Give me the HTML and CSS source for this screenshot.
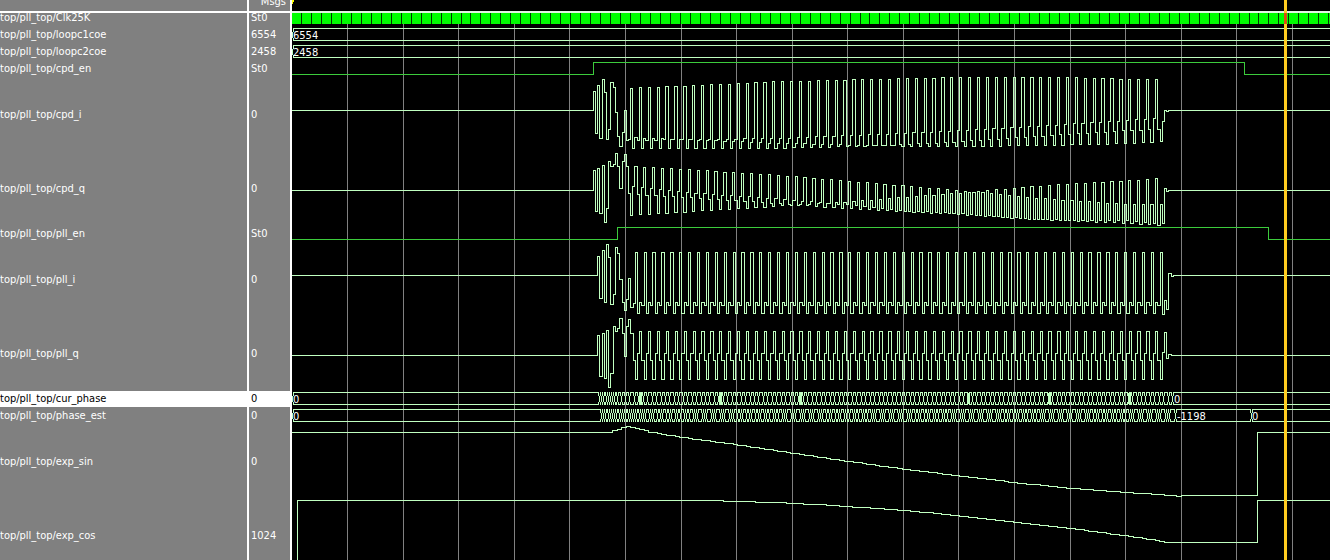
FILE: index.html
```html
<!DOCTYPE html>
<html lang="en">
<head>
<meta charset="utf-8">
<title>Wave</title>
<link rel="stylesheet" href="styles.css">
</head>
<body>
<main class="viewer">
  <section class="pane names" aria-label="Signals">
    <div class="head"></div>
    <div class="row first">top/pll_top/Clk25K</div>
    <div class="row">top/pll_top/loopc1coe</div>
    <div class="row">top/pll_top/loopc2coe</div>
    <div class="row">top/pll_top/cpd_en</div>
    <div class="row tall">top/pll_top/cpd_i</div>
    <div class="row tall">top/pll_top/cpd_q</div>
    <div class="row">top/pll_top/pll_en</div>
    <div class="row tall">top/pll_top/pll_i</div>
    <div class="row tall">top/pll_top/pll_q</div>
    <div class="row selected">top/pll_top/cur_phase</div>
    <div class="row">top/pll_top/phase_est</div>
    <div class="row tall">top/pll_top/exp_sin</div>
    <div class="row tall">top/pll_top/exp_cos</div>
  </section>
  <section class="pane values" aria-label="Values">
    <div class="head">Msgs</div>
    <div class="row first">St0</div>
    <div class="row">6554</div>
    <div class="row">2458</div>
    <div class="row">St0</div>
    <div class="row tall">0</div>
    <div class="row tall">0</div>
    <div class="row">St0</div>
    <div class="row tall">0</div>
    <div class="row tall">0</div>
    <div class="row selected">0</div>
    <div class="row">0</div>
    <div class="row tall">0</div>
    <div class="row tall">1024</div>
  </section>
  <section class="waves" aria-label="Waveforms">
    <svg class="plot" id="plot"></svg>
  </section>
</main>
<script src="waves.js"></script>
</body>
</html>
```
FILE: styles.css
```css
* {
  box-sizing: border-box;
}

body {
  margin: 0;
  height: 100vh;
  overflow: hidden;
  background: #000;
  color: #fff;
  font-family: "DejaVu Sans Condensed", "Noto Sans", sans-serif;
  font-size: 11px;
  line-height: 16px;
}

.viewer {
  display: grid;
  grid-template-columns: 249px 43px minmax(0, 1fr);
  height: 100%;
}

.pane {
  background: #808080;
  border-right: 2px solid #fff;
  overflow: hidden;
  white-space: nowrap;
}

.head {
  display: flex;
  align-items: flex-end;
  justify-content: flex-end;
  height: 13px;
  padding-right: 4px;
  padding-bottom: 1px;
  border-bottom: 2px solid #fff;
}

.row {
  display: flex;
  align-items: center;
  height: 17px;
  border-top: 1px solid #808080;
}

.first {
  height: 13px;
  line-height: 10px;
  align-items: flex-start;
  border-top: 0;
}

.tall {
  height: 74px;
}

.selected {
  background: #fff;
  color: #000;
}

.values .row {
  padding-left: 2px;
}

.waves {
  overflow: hidden;
}

.plot {
  display: block;
  width: 100%;
  height: 100%;
}

.plot path {
  fill: none;
  stroke-width: 1px;
  shape-rendering: crispEdges;
}

.plot rect {
  shape-rendering: crispEdges;
}

.plot .grid {
  stroke: #808080;
}

.plot .vector {
  stroke: #c0ffc0;
}

.plot .logic {
  stroke: #3ccb3c;
}

.plot .tick {
  stroke: #003800;
}

.plot .clock {
  fill: #00ff00;
}

.plot .dense {
  fill: #c0ffc0;
}

.plot .rule {
  fill: #e4f4e4;
}

.plot .cursor {
  fill: #ffcc20;
}

.plot .cursor-clock {
  fill: #d85010;
}

.plot .marker {
  fill: #ffff00;
}

.plot text {
  fill: #fff;
}
```
FILE: waves.js
```js
const NS = "http://www.w3.org/2000/svg";
const plot = document.getElementById("plot");
const ORIGIN = 292;
const END = 4000;
const STEP = 8.898 / 4;

const root = document.createElementNS(NS, "g");
root.setAttribute("transform", "translate(" + -ORIGIN + " 0)");
plot.append(root);

function add(tag, attrs, text) {
  const node = document.createElementNS(NS, tag);
  for (const key in attrs) node.setAttribute(key, attrs[key]);
  if (text) node.textContent = text;
  root.append(node);
}

const rect = (cls, x, y, width, height) => add("rect", { class: cls, x, y, width, height });
const path = (cls, d) => add("path", { class: cls, d });
const px = v => Math.floor(v) + 0.5;

// Stepped line: each [x, y] holds its level until the next point.
function steps(cls, points) {
  let d = "M" + ORIGIN + " " + px(points[0][1]);
  points.slice(1).forEach(p => { d += "H" + px(p[0]) + "V" + px(p[1]); });
  path(cls, d + "H" + END);
}

function level(keys, x) {
  if (x <= keys[0][0]) return keys[0][1];
  for (let i = 1; i < keys.length; i++) {
    const [x0, y0] = keys[i - 1];
    const [x1, y1] = keys[i];
    if (x <= x1) return y0 + (y1 - y0) * (x - x0) / (x1 - x0);
  }
  return keys[keys.length - 1][1];
}

// Lists of [third-of-pixel x, third-of-pixel y] relative to (ox, oy).
const scaled = (ox, oy, list) => list.map(([x, y]) => [ox + x / 3, oy + y / 3]);

function burst(start, periods, slots) {
  const out = [];
  for (let n = 0; n < periods * 4 + 1; n++) {
    const x = start + n * STEP;
    out.push([x, level(slots[n % 4], x) + 0.3]);
  }
  return out;
}

for (let x = 347.2; x < END; x += 55.57) path("grid", "M" + (Math.round(x) + 0.5) + " 24V3000");

// Clock
rect("clock", ORIGIN, 13, END, 11);
for (let x = 301.4; x < END; x += 9.975) path("tick", "M" + px(x) + " 13V24");
rect("rule", ORIGIN, 11, END, 2);

steps("logic", [[292, 74], [593, 62], [1244, 74]]);
steps("logic", [[292, 239], [617, 227], [1268, 239]]);

// cpd_i
steps("vector", [
  ...scaled(580, 60, [[-864, 151], [40, 94], [47, 220], [52, 76], [58, 235], [68, 58], [74, 97], [79, 238],
    [85, 208], [91, 67], [100, 82], [106, 157], [112, 229], [118, 259], [127, 217], [133, 151], [139, 241], [145, 238]]),
  ...burst(630.4, 59, [
    [[631, 88], [680, 86], [775, 81.5], [880, 79], [950, 77.3], [1060, 77.3], [1130, 79], [1156, 79]],
    [[631, 148], [775, 148], [880, 145.5], [950, 142], [1035, 136.3], [1130, 130], [1156, 129.3]],
    [[631, 137.5], [680, 139], [775, 143], [880, 145.5], [950, 146.5], [1035, 145.3], [1130, 143.3], [1156, 141.5]],
    [[631, 140.3], [680, 139.3], [775, 138.3], [880, 134], [950, 131], [1035, 126], [1130, 120], [1156, 118]]
  ]),
  ...scaled(1080, 0, [[233, 388], [241, 424], [247, 364], [253, 331], [259, 334], [265, 331]])
]);

// cpd_q
steps("vector", [
  ...scaled(580, 60, [[-864, 391], [40, 331], [46, 454], [52, 325], [58, 460], [67, 316], [73, 487], [79, 445],
    [85, 304], [91, 319], [100, 313], [106, 280], [112, 319], [118, 385], [127, 304], [133, 283], [139, 319], [145, 400]]),
  ...burst(630.4, 59, [
    [[631, 215], [680, 212], [775, 206], [840, 202.3], [903, 197], [950, 193.7], [1035, 186], [1130, 180.3], [1156, 178.3]],
    [[631, 186], [680, 192], [775, 198.5], [840, 204], [903, 210.7], [950, 212.7], [1035, 219], [1130, 223.3], [1156, 225]],
    [[631, 166], [680, 169], [775, 175], [840, 180.3], [910, 186.3], [950, 189.5], [1035, 198], [1130, 204.3], [1156, 204.3]],
    [[631, 194.3], [680, 197], [775, 203], [840, 208], [910, 211.7], [950, 213.7], [1035, 219.5], [1130, 220.3], [1156, 223]]
  ]),
  ...scaled(1080, 0, [[232, 676], [241, 613], [247, 670], [253, 565], [259, 574], [265, 571]])
]);

// pll_i
steps("vector", [
  ...scaled(580, 235, [[-864, 121], [52, 64], [58, 190], [67, 46], [73, 202], [79, 28], [85, 67], [91, 208],
    [100, 178], [106, 37], [112, 55], [118, 133], [127, 202], [133, 226], [139, 193], [145, 130], [151, 217], [160, 205]]),
  ...burst(635.2, 59, [[[0, 252]], [[0, 313]], [[0, 302]], [[0, 305]]]),
  ...scaled(1080, 240, [[247, 223], [253, 181], [259, 208], [265, 100], [274, 109], [280, 106]])
]);

// pll_q
steps("vector", [
  ...scaled(580, 235, [[-864, 361], [52, 301], [58, 424], [67, 295], [73, 430], [79, 286], [85, 457], [91, 415],
    [100, 274], [106, 289], [112, 280], [118, 250], [127, 295], [133, 364], [139, 274], [145, 253], [151, 295], [160, 376]]),
  ...burst(635.2, 59, [[[0, 379]], [[0, 353]], [[0, 331]], [[0, 360]]]),
  ...scaled(1080, 240, [[247, 337], [253, 277], [259, 355], [265, 343], [274, 346]])
]);

// Bus: two rails joined at every value change.
function bus(top, changes) {
  const t = top + 0.5;
  const b = top + 12.5;
  let d = "";
  let from = ORIGIN;
  changes.forEach(c => {
    const x = px(c);
    d += "M" + from + " " + t + "H" + (x - 0.5) + "M" + from + " " + b + "H" + (x - 0.5);
    d += "M" + (x - 1) + " " + t + "V" + (t + 3) + "M" + x + " " + (t + 3) + "V" + (b - 3) + "M" + (x - 1) + " " + (b - 3) + "V" + b;
    d += "M" + (x + 1) + " " + t + "V" + (t + 3) + "M" + (x + 1) + " " + (b - 3) + "V" + b;
    from = x + 0.5;
  });
  path("vector", d + "M" + from + " " + t + "H" + END + "M" + from + " " + b + "H" + END);
}

bus(28, [292]);
bus(45, [292]);

const current = [292];
for (let x = 599.4; x < 618; x += STEP) current.push(x);
for (let x = 621; x < 1176; x += STEP * 2) current.push(x);
bus(392, current);
[639, 719, 799, 967, 1048, 1128].forEach(x => rect("dense", x, 393, 3, 11));

const estimate = [292];
for (let x = 601.4; x < 648; x += STEP) estimate.push(x);
for (let x = 649; x < 1170; x += STEP * 4) estimate.push(x, x + STEP, x + STEP * 2);
estimate.push(1175, 1251);
bus(409, estimate);

// Expected sine and cosine
function curve(from, to, keys) {
  const out = [];
  for (let x = from; x < to; x += STEP * 2) out.push([x, level(keys, x)]);
  return out;
}

steps("vector", [
  [292, 432],
  ...curve(604, 1176, [[608, 432.3], [615, 430], [620, 428], [625, 426.3], [633, 427.5], [650, 432.5], [676, 436.7],
    [738, 445.3], [793, 453.5], [847, 461.5], [904, 469.5], [959, 476], [1014, 482.7], [1070, 488.5], [1125, 492.5], [1176, 495.8]]),
  [1176, 496], [1181, 495], [1257, 432]
]);
steps("vector", [
  [292, 570], [297, 500],
  ...curve(715, 1166, [[717, 500.8], [755, 502], [782, 503], [819, 504.7], [847, 506.7], [904, 510.5], [959, 516],
    [1014, 522.3], [1070, 528.5], [1125, 535.9], [1166, 542.3]]),
  [1166, 542], [1257, 500]
]);

[[293, 39, "6554"], [293, 56, "2458"], [293, 403, "0"], [293, 420, "0"],
  [1174, 403, "0"], [1177, 420, "-1198"], [1252, 420, "0"]].forEach(([x, y, label]) => add("text", { x, y }, label));

rect("cursor", 1284, 0, 3, 3000);
rect("cursor-clock", 1284, 13, 3, 11);
rect("marker", 292, 0, 1, 4);
rect("marker", 293, 0, 1, 2);
```
